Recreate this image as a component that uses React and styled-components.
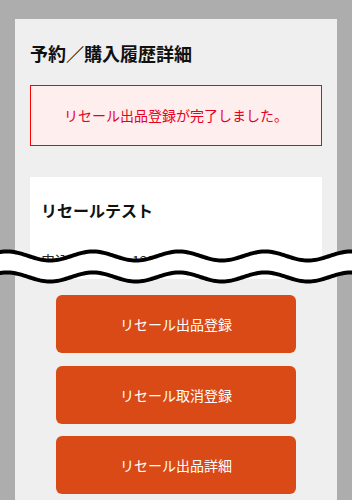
import React from 'react';
import styled, { createGlobalStyle } from "styled-components";

const GlobalStyle = createGlobalStyle`
    html, body {
        margin: 0;
        padding: 0;
        background: #adadad;
        font-family: "Noto Sans CJK JP", "Noto Sans", sans-serif;
    }
`

const buildWave = (offset) => {
    const pts = [];
    for (let x = -4; x <= 356; x += 2) {
        const y = offset + 4.5 * Math.cos((2 * Math.PI * (x - 50)) / 86);
        pts.push([x, y]);
    }
    return pts;
}

const topWave = buildWave(12);
const bottomWave = buildWave(33);
const toPath = (pts) => pts.map((p, i) => (i ? 'L' : 'M') + p[0] + ' ' + p[1].toFixed(2)).join(' ');
const fillPath = toPath(topWave) + ' ' + bottomWave.slice().reverse().map(p => 'L' + p[0] + ' ' + p[1].toFixed(2)).join(' ') + ' Z';

const CutMark = () => (
    <Cut width="352" height="46" viewBox="0 0 352 46">
        <path d={fillPath} fill="#ffffff" />
        <path d={toPath(topWave)} fill="none" stroke="#000" strokeWidth="4" strokeLinecap="round" />
        <path d={toPath(bottomWave)} fill="none" stroke="#000" strokeWidth="4" strokeLinecap="round" />
    </Cut>
)

const buttons = ['リセール出品登録', 'リセール取消登録', 'リセール出品詳細'];

const App = () => {
    return (
        <React.Fragment>
            <GlobalStyle />
            <Page>
                <Panel>
                    <Title>予約／購入履歴詳細</Title>
                    <Alert>リセール出品登録が完了しました。</Alert>
                    <Card>
                        <CardTitle>リセールテスト</CardTitle>
                        <Row>
                            <Label>申込番号</Label>
                            <Value>12345678</Value>
                        </Row>
                    </Card>
                    <Buttons>
                        {buttons.map(b => <Button key={b}>{b}</Button>)}
                    </Buttons>
                </Panel>
                <CutMark />
            </Page>
        </React.Fragment>
    );
}

export default App;

const Page = styled.div`
    position: relative;
    width: 352px;
    height: 500px;
    overflow: hidden;
    padding-top: 19px;
    box-sizing: border-box;
`
const Panel = styled.div`
    margin: 0 15px;
    min-height: 481px;
    background: #efefef;
    padding: 22px 15px 20px;
    box-sizing: border-box;
`
const Title = styled.h1`
    margin: 0;
    font-size: 18px;
    line-height: 24px;
    font-weight: bold;
    color: #111;
`
const Alert = styled.div`
    margin-top: 20px;
    border: 1px solid #ff0000;
    background: #ffeeee;
    color: #e8001c;
    font-size: 14px;
    line-height: 21px;
    padding: 19px 10px;
    text-align: center;
`
const Card = styled.div`
    margin-top: 31px;
    background: #ffffff;
    padding: 21px 11px 8px;
`
const CardTitle = styled.h2`
    margin: 0;
    font-size: 16px;
    line-height: 24px;
    font-weight: bold;
    color: #111;
`
const Row = styled.div`
    display: flex;
    margin-top: 28px;
    font-size: 14px;
    line-height: 21px;
    color: #222;
`
const Label = styled.div`
    width: 91px;
`
const Value = styled.div`
    flex: 1;
`
const Buttons = styled.div`
    display: flex;
    flex-direction: column;
    align-items: center;
    gap: 12.5px;
    margin-top: 16px;
`
const Button = styled.button`
    width: 240px;
    height: 58px;
    border: none;
    border-radius: 6px;
    background: #d94a16;
    color: #ffffff;
    font-family: inherit;
    font-size: 14px;
    cursor: pointer;
`
const Cut = styled.svg`
    position: absolute;
    left: 0;
    top: 244px;
    display: block;
`
